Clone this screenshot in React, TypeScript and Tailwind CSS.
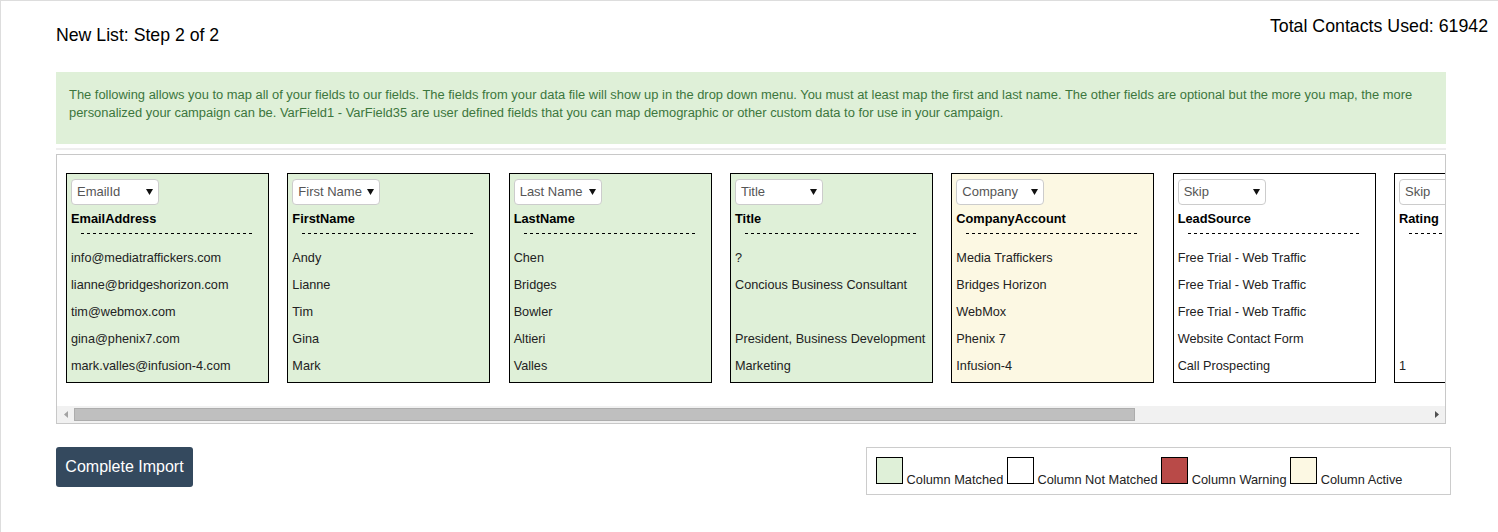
import React from "react";

type Col = {
  sel: string;
  head: string;
  rows: string[];
  kind: "matched" | "active" | "none";
};

const cols: Col[] = [
  {
    sel: "EmailId",
    head: "EmailAddress",
    rows: [
      "info@mediatraffickers.com",
      "lianne@bridgeshorizon.com",
      "tim@webmox.com",
      "gina@phenix7.com",
      "mark.valles@infusion-4.com",
    ],
    kind: "matched",
  },
  { sel: "First Name", head: "FirstName", rows: ["Andy", "Lianne", "Tim", "Gina", "Mark"], kind: "matched" },
  { sel: "Last Name", head: "LastName", rows: ["Chen", "Bridges", "Bowler", "Altieri", "Valles"], kind: "matched" },
  {
    sel: "Title",
    head: "Title",
    rows: ["?", "Concious Business Consultant", "", "President, Business Development", "Marketing"],
    kind: "matched",
  },
  {
    sel: "Company",
    head: "CompanyAccount",
    rows: ["Media Traffickers", "Bridges Horizon", "WebMox", "Phenix 7", "Infusion-4"],
    kind: "active",
  },
  {
    sel: "Skip",
    head: "LeadSource",
    rows: [
      "Free Trial - Web Traffic",
      "Free Trial - Web Traffic",
      "Free Trial - Web Traffic",
      "Website Contact Form",
      "Call Prospecting",
    ],
    kind: "none",
  },
  { sel: "Skip", head: "Rating", rows: ["", "", "", "", "1"], kind: "none" },
];

function Column({ c }: { c: Col }) {
  const bg =
    c.kind === "matched" ? "bg-[#dff0d8]" : c.kind === "active" ? "bg-[#fcf8e3]" : "bg-white";
  return (
    <div className={`w-[203px] h-[210px] shrink-0 border border-black px-[4px] pt-[5px] ${bg}`}>
      <div className="w-[88px] h-[26px] border border-[#ccc] rounded-[4px] bg-white flex items-center justify-between pl-[5px] pr-[5px]">
        <span className="text-[13px] leading-[20px] text-[#555] whitespace-nowrap">{c.sel}</span>
        <svg width="7" height="6" viewBox="0 0 7 6" className="shrink-0">
          <polygon points="0,0 7,0 3.5,6" fill="#111" />
        </svg>
      </div>
      <div className="mt-[5px] text-[12.8px] leading-[18px] font-bold text-black whitespace-nowrap">{c.head}</div>
      <div className="mt-[5px] mx-[10px] h-[1px] bg-[repeating-linear-gradient(to_right,#000_0px,#000_3px,transparent_3px,transparent_6px)]" />
      <div className="mt-[11px]">
        {c.rows.map((r, i) => (
          <div key={i} className="h-[27px] text-[12.7px] leading-[27px] text-[#222] whitespace-nowrap">
            {r}
          </div>
        ))}
      </div>
    </div>
  );
}

function Swatch({ cls }: { cls: string }) {
  return <span className={`inline-block w-[27px] h-[27px] border border-black align-baseline ${cls}`} />;
}

export default function App() {
  return (
    <div className="w-[1498px] h-[532px] bg-white border-t border-l border-[#ddd] font-['Liberation_Sans',Arial,sans-serif] text-black overflow-hidden">
      <div className="flex items-start justify-between">
        <h1 className="ml-[55px] mt-[23px] text-[17.7px] leading-[22px] font-normal">New List: Step 2 of 2</h1>
        <div className="mt-[14px] mr-[10px] text-[17.75px] leading-[22px]">Total Contacts Used: 61942</div>
      </div>

      <div className="ml-[55px] w-[1390px]">
        <div className="mt-[26px] h-[72px] bg-[#dff0d8] text-[#3c763d] text-[12.92px] leading-[18px] px-[13px] pt-[14px]">
          <div className="whitespace-nowrap">
            The following allows you to map all of your fields to our fields. The fields from your data file will show
            up in the drop down menu. You must at least map the first and last name. The other fields are optional but
            the more you map, the more
          </div>
          <div className="whitespace-nowrap">
            personalized your campaign can be. VarField1 - VarField35 are user defined fields that you can map
            demographic or other custom data to for use in your campaign.
          </div>
        </div>

        <div className="mt-[4px] h-[2px] bg-[#eee]" />

        <div className="mt-[4px] border border-[#c8c8c8]">
          <div className="overflow-hidden pt-[18px] pl-[9px]">
            <div className="flex gap-[18.33px]">
              {cols.map((c, i) => (
                <Column key={i} c={c} />
              ))}
            </div>
          </div>
          <div className="mt-[23px] h-[17px] bg-[#f1f1f1] flex items-center">
            <div className="w-[17px] h-[17px] flex items-center justify-center">
              <svg width="4" height="7" viewBox="0 0 4 7">
                <polygon points="4,0 4,7 0,3.5" fill="#a3a3a3" />
              </svg>
            </div>
            <div className="w-[1061px] h-[13px] bg-[#bfbfbf] border border-[#adadad]" />
            <div className="flex-1" />
            <div className="w-[17px] h-[17px] flex items-center justify-center">
              <svg width="4" height="7" viewBox="0 0 4 7">
                <polygon points="0,0 0,7 4,3.5" fill="#505050" />
              </svg>
            </div>
          </div>
        </div>
      </div>

      <div className="ml-[55px] w-[1395px] mt-[23px] flex items-start justify-between">
        <button className="w-[137px] h-[40px] bg-[#34495e] rounded-[3px] text-white text-[16px] leading-[20px]">
          Complete Import
        </button>
        <div className="w-[585px] h-[48px] border border-[#ccc] pl-[9px] pt-[9px] text-[12.8px] leading-none text-[#222] whitespace-nowrap">
          <Swatch cls="bg-[#dff0d8]" /> Column Matched <Swatch cls="bg-white" /> Column Not Matched{" "}
          <Swatch cls="bg-[#b94a48]" /> Column Warning <Swatch cls="bg-[#fcf8e3]" /> Column Active
        </div>
      </div>
    </div>
  );
}
